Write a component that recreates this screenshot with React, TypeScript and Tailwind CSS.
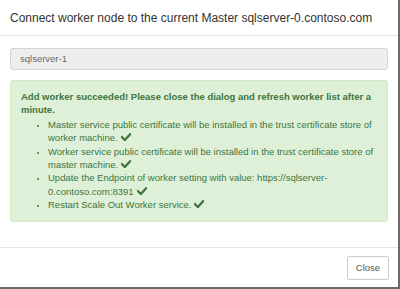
function Check() {
  return (
    <svg width="10" height="8" viewBox="0 0 10 8" className="ml-[3px] inline-block align-baseline">
      <path d="M1 4.2 L3.8 7 L9.2 1.2" fill="none" stroke="#3c763d" strokeWidth="2.3" strokeLinecap="square" />
    </svg>
  );
}

const steps = [
  "Master service public certificate will be installed in the trust certificate store of worker machine.",
  "Worker service public certificate will be installed in the trust certificate store of master machine.",
  "Update the Endpoint of worker setting with value: https://sqlserver-0.contoso.com:8391",
  "Restart Scale Out Worker service.",
];

export default function App() {
  return (
    <div className="w-[400px] h-[289px] bg-white border-r-2 border-b-2 border-[#6b6b6b] flex flex-col font-['Liberation_Sans',Arial,sans-serif] text-[#333]">
      {/* Header */}
      <div className="h-[36px] border-b border-[#e5e5e5] px-[10px] flex items-center">
        <h4 className="text-[12px] leading-none text-[#333] pt-[1px]">
          Connect worker node to the current Master sqlserver-0.contoso.com
        </h4>
      </div>

      {/* Body */}
      <div className="px-[10px] pt-[12px] pb-[25px]">
        <div className="h-[22px] rounded-[3px] border border-[#d4d4d4] bg-[#eeeeee] px-[9px] flex items-center text-[9.5px] text-[#666]">
          sqlserver-1
        </div>
        <div className="mt-[10px] rounded-[3px] bg-[#dff0d8] border border-[#d6e9c6] px-[10px] pt-[9px] pb-[9px] text-[9.5px] leading-[13.4px] text-[#3c763d]">
          <p className="font-bold">
            Add worker succeeded! Please close the dialog and refresh worker list after a minute.
          </p>
          <ul className="list-disc pl-[27px] mt-[1px]">
            {steps.map((s) => (
              <li key={s} className="marker:text-[8px]">
                {s}
                <Check />
              </li>
            ))}
          </ul>
        </div>
      </div>

      {/* Footer */}
      <div className="flex-1 border-t border-[#e5e5e5] flex items-start justify-end px-[9px] pt-[8px]">
        <button className="h-[24px] w-[42px] rounded-[2px] border border-[#cccccc] bg-white text-[9.5px] text-[#555]">
          Close
        </button>
      </div>
    </div>
  );
}
